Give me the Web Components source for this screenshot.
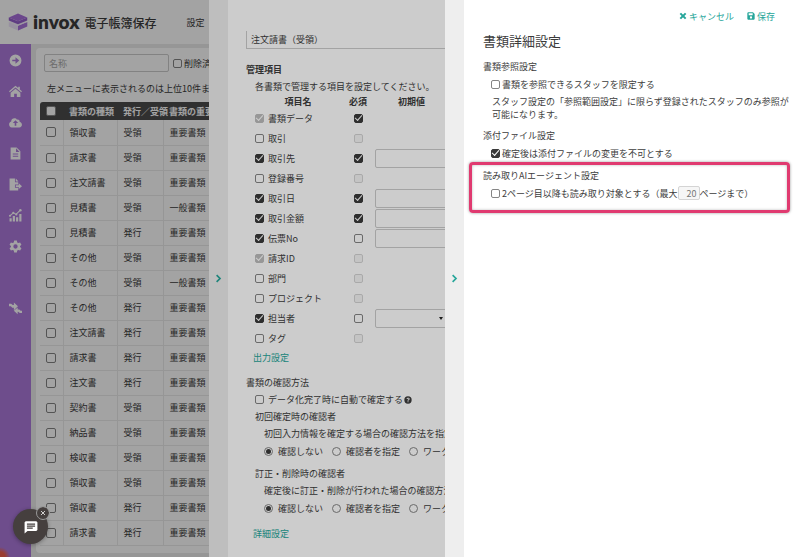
<!DOCTYPE html>
<html lang="ja">
<head>
<meta charset="utf-8">
<title>invox 電子帳簿保存</title>
<style>
html, body {
    height: 100%;
    margin: 0;
}

body {
    --teal: #26a69a;
    --text: #3c3c3c;
    overflow: hidden;
    font: 9px/17px "Noto Sans CJK JP", sans-serif;
    color: var(--text);
}
</style>
</head>
<body>
<invox-app></invox-app>
<script>
// shared by every element that holds a form control
const controls = `
* { box-sizing: border-box; }

input, select, button {
    font: inherit;
    color: inherit;
    margin: 0;
}

input[type=checkbox], input[type=radio] {
    appearance: none;
    flex: none;
    width: 9px;
    height: 9px;
    border: 1px solid #858585;
    border-radius: 2px;
    background: #fff;
    display: grid;
    place-content: center;
}

input[type=radio] { border-radius: 50%; }

input[type=checkbox]:checked {
    background: #3a3a3a;
    border-color: #3a3a3a;
}

input[type=checkbox]:checked::before {
    content: "";
    width: 6px;
    height: 3px;
    border: solid #fff;
    border-width: 0 0 1px 1px;
    transform: translateY(-1px) rotate(-48deg);
}

input[type=radio]:checked::before {
    content: "";
    width: 5px;
    height: 5px;
    border-radius: 50%;
    background: #3a3a3a;
}

input:disabled {
    border-color: #d4d4d4;
    background: #f6f6f6;
}

input[type=checkbox]:checked:disabled {
    border-color: #bdbdbd;
    background: #bdbdbd;
}

a {
    color: var(--teal);
    text-decoration: none;
}
`;

const icons = {
    next: `<path fill-rule="evenodd" d="M12 1a11 11 0 1 0 0 22 11 11 0 0 0 0-22zm-6 9.500h6V6l7 6-7 6v-4.500H6z"/>`,
    home: `<path d="M12 7 3 14.500V22h6.500v-6h5v6H21v-7.500z"/><path d="M12 1.500 0 11.500l1.500 1.800L12 4.600l10.500 8.700 1.500-1.800-4-3.400V3h-3v2.600z"/>`,
    upload: `<path fill-rule="evenodd" d="M19.500 10.500c.8-3-2.700-5-4.800-3.600C12.500 2.500 4 3.500 4 10.300-2 12.500-.5 21 5 21h14c6 0 6.800-8.500.5-10.500zM13.500 13v5h-3v-5H7l5-5 5 5z"/>`,
    file: `<path fill-rule="evenodd" d="M3 1h11l7 7v15H3zm10 1.500V9h6.500zM7 12v2h10v-2zm0 4v2h10v-2z"/>`,
    exporting: `<path d="M1 1h10v7h6v4h-6v6h6v5H1z"/><path d="m12.500 1 5 5.500h-5zM18 9.500l6 5.500-6 5.500v-4h-5.500v-3H18z"/>`,
    chart: `<path d="M1 17h4v6H1zm6-4h4v10H7zm6 2h4v8h-4zm6-6h4v14h-4z"/><path d="m1 13 7-6 5 3 7-7" fill="none" stroke="currentColor" stroke-width="2"/><circle cx="2" cy="12.500" r="2"/><circle cx="8" cy="7" r="2"/><circle cx="13.500" cy="10" r="2"/><circle cx="21" cy="2.500" r="2.300"/>`,
    gear: `<path fill-rule="evenodd" d="M9.500 1h5l.7 3.500 2 1.100 3.300-1.200 2.500 4.300L20.400 11v2l2.600 2.300-2.500 4.300-3.300-1.200-2 1.100-.7 3.500h-5l-.7-3.500-2-1.100-3.300 1.200L1 15.300 3.600 13v-2L1 8.700l2.500-4.300 3.300 1.200 2-1.100zM12 8a4 4 0 1 0 0 8 4 4 0 0 0 0-8z"/>`,
    swap: `<path d="M0 3h4l3 2.500h2V1l7.500 7L9 15v-4.500H6L3.500 8H0z"/><path d="M24 20.500h-4L17 18h-1v4.500L9 16l7-6v4h3l2.500 2H24z"/>`,
    chevron: `<path d="m7 3 9 9-9 9" fill="none" stroke="currentColor" stroke-width="4.500"/>`,
    cross: `<path d="m4 4 16 16M20 4 4 20" fill="none" stroke="currentColor" stroke-width="6"/>`,
    thinCross: `<path d="m4 4 16 16M20 4 4 20" fill="none" stroke="currentColor" stroke-width="3"/>`,
    save: `<path fill-rule="evenodd" d="M3 1h15l5 5v15l-2 2H3l-2-2V3zm2 3v6h12V4zm7 9a3.500 3.500 0 1 0 0 7 3.500 3.500 0 0 0 0-7z"/>`,
    help: `<path fill-rule="evenodd" d="M12 1a11 11 0 1 0 0 22 11 11 0 0 0 0-22zM7.500 9C8 3.500 17 4 17 9c0 3-3.500 3-3.500 5h-3c0-4 3.500-3.500 3.500-5.200 0-1.900-3.300-1.900-3.500.2zm3 7h3v3h-3z"/>`,
    chat: `<path fill-rule="evenodd" d="M3 2h18l2 2v13l-2 2H6l-5 4V4zm2 4v2h14V6zm0 3.500v2h14v-2zM5 13v2h10v-2z"/>`,
    logo: `<path fill="#efe4fa" d="M1 12v6l12 5 12-5v-6l-12 5z"/><path fill="#a873dc" d="m13 17 12-5v6l-12 5z"/><path fill="#f3ecfb" d="m1 12 5-2 7 3 7-3 5 2-12 5z"/><path fill="#9560cc" d="M1 6v4l12 5 12-5V6l-12 5z"/><path fill="#a86fdc" d="M1 6 13 1l12 5-12 5z"/>`,
};

class AppIcon extends HTMLElement {
    constructor() {
        super();
        this.attachShadow({ mode: "open" });
    }
    connectedCallback() {
        const size = this.getAttribute("size") || 14;
        this.shadowRoot.innerHTML = `<style>
        :host { display: inline-flex; flex: none; }
        svg { display: block; fill: currentColor; }
        </style>
        <svg width="${size}" height="${size}" viewBox="0 0 ${this.getAttribute("name") === "logo" ? 26 : 24} 24" aria-hidden="true">${icons[this.getAttribute("name")]}</svg>`;
    }
}
customElements.define("app-icon", AppIcon);

class AppHeader extends HTMLElement {
    constructor() {
        super();
        this.attachShadow({ mode: "open" }).innerHTML = `<style>
        :host {
            display: flex;
            align-items: center;
            height: 44px;
            padding-left: 8px;
            background: #fff;
        }
        .brand {
            display: flex;
            align-items: center;
            gap: 5px;
            font-size: 12px;
            font-weight: 500;
        }
        b {
            font: 800 19px/24px Lato, sans-serif;
        }
        nav { margin-left: 30px; }
        a { color: inherit; text-decoration: none; }
        </style>
        <div class="brand"><app-icon name="logo" size="20"></app-icon><b>invox</b><span>電子帳簿保存</span></div>
        <nav><a href="#settings">設定</a></nav>`;
    }
}
customElements.define("app-header", AppHeader);

class SideMenu extends HTMLElement {
    constructor() {
        super();
        const items = [["next", "開く"], ["home", "ホーム"], ["upload", "アップロード"], ["file", "書類"],
            ["exporting", "出力"], ["chart", "集計"], ["gear", "設定"], ["swap", "切り替え"]];
        this.attachShadow({ mode: "open" }).innerHTML = `<style>
        :host {
            display: block;
            flex: none;
            width: 31px;
            background: radial-gradient(circle at 0 100%, #f0604c 5px, #ad7adc 10px);
        }
        nav { display: flex; flex-direction: column; padding-top: 1px; }
        a {
            display: flex;
            justify-content: center;
            align-items: center;
            height: 31px;
            color: #fff;
        }
        a:last-child { margin-top: 31px; }
        </style>
        <nav>${items.map(([icon, label]) => `<a href="#${icon}" aria-label="${label}"><app-icon name="${icon}" size="13"></app-icon></a>`).join("")}</nav>`;
    }
}
customElements.define("side-menu", SideMenu);

class DocumentList extends HTMLElement {
    constructor() {
        super();
        const rows = [
            ["領収書", "受領", "重要書類"], ["請求書", "受領", "重要書類"], ["注文請書", "受領", "重要書類"],
            ["見積書", "受領", "一般書類"], ["見積書", "発行", "重要書類"], ["その他", "受領", "重要書類"],
            ["その他", "受領", "一般書類"], ["その他", "発行", "重要書類"], ["注文請書", "発行", "重要書類"],
            ["請求書", "発行", "重要書類"], ["注文書", "発行", "重要書類"], ["契約書", "受領", "重要書類"],
            ["納品書", "受領", "重要書類"], ["検収書", "受領", "重要書類"], ["領収書", "受領", "重要書類"],
            ["領収書", "発行", "重要書類"], ["請求書", "発行", "重要書類"],
        ];
        this.attachShadow({ mode: "open" }).innerHTML = `<style>${controls}
        :host {
            display: block;
            flex: 1;
            padding: 4px 5px;
            background: #ebebeb;
        }
        .card {
            height: 100%;
            padding: 6px 4px;
            border-radius: 4px;
            background: #fff;
        }
        form {
            display: flex;
            align-items: center;
            gap: 4px;
            padding-left: 4px;
        }
        .name {
            width: 125px;
            height: 18px;
            padding: 0 4px;
            border: 1px solid #ccc;
            border-radius: 2px;
            background: none;
        }
        .name::placeholder { color: #aaa; }
        label { display: flex; align-items: center; gap: 2px; }
        p { margin: 8px 0 5px 7px; }
        table {
            width: 100%;
            table-layout: fixed;
            border-collapse: collapse;
        }
        col.check { width: 23px; }
        col.type { width: 54px; }
        col.way { width: 46px; }
        td, th {
            height: 25px;
            padding: 0 6px;
            text-align: left;
            white-space: nowrap;
            border: solid #ececec;
            border-width: 0 1px 1px 0;
        }
        th {
            height: 18px;
            border: 0;
            background: #4b4b4b;
            color: #fff;
        }
        th:first-child { border-top-left-radius: 3px; }
        td input[type=checkbox], th input[type=checkbox] { width: 10px; height: 10px; }
        </style>
        <div class="card">
            <form>
                <input class="name" placeholder="名称" aria-label="名称">
                <label><input type="checkbox">削除済みを含む</label>
            </form>
            <p>左メニューに表示されるのは上位10件までです。</p>
            <table>
                <colgroup><col class="check"><col class="type"><col class="way"><col></colgroup>
                <thead><tr><th><input type="checkbox" aria-label="すべて選択"></th><th>書類の種類</th><th>発行／受領</th><th>書類の重要度</th></tr></thead>
                <tbody>${rows.map(row => `<tr><td><input type="checkbox" aria-label="${row[0]}"></td>${row.map(cell => `<td>${cell}</td>`).join("")}</tr>`).join("")}</tbody>
            </table>
        </div>`;
    }
}
customElements.define("document-list", DocumentList);

class SideDrawer extends HTMLElement {
    constructor() {
        super();
        this.attachShadow({ mode: "open" }).innerHTML = `<style>
        :host {
            position: absolute;
            inset: 0;
            display: flex;
            padding-left: var(--drawer-left);
            background: rgba(0, 0, 0, 0.2);
        }
        button {
            display: flex;
            justify-content: center;
            align-items: center;
            flex: none;
            width: 19px;
            padding: 0;
            border: 0;
            background: #eee;
            color: var(--teal);
        }
        .body {
            flex: 1;
            min-width: 0;
            overflow: hidden;
            background: #fff;
        }
        </style>
        <button aria-label="閉じる"><app-icon name="chevron" size="9"></app-icon></button>
        <div class="body"><slot></slot></div>`;
    }
}
customElements.define("side-drawer", SideDrawer);

class DocumentSettings extends HTMLElement {
    constructor() {
        super();
        // name, state of the two boxes, kind of default value field
        const items = [
            ["書類データ", "checked disabled", "checked", ""],
            ["取引", "", "disabled", ""],
            ["取引先", "checked", "checked", "text"],
            ["登録番号", "", "disabled", ""],
            ["取引日", "checked", "checked", "text"],
            ["取引金額", "checked", "checked", "text"],
            ["伝票No", "checked", "", "text"],
            ["請求ID", "checked disabled", "disabled", ""],
            ["部門", "", "disabled", ""],
            ["プロジェクト", "", "disabled", ""],
            ["担当者", "checked", "", "select"],
            ["タグ", "", "disabled", ""],
        ];
        const field = (kind, name) => {
            if (kind === "text")
                return `<input class="value" aria-label="${name}の初期値">`;
            if (kind === "select")
                return `<div class="pick"><select class="value" aria-label="${name}の初期値"><option></option></select></div>`;
            return "";
        };
        const radios = name => `<div class="radios">
            <label><input type="radio" name="${name}" checked>確認しない</label>
            <label><input type="radio" name="${name}">確認者を指定</label>
            <label><input type="radio" name="${name}">ワークフロー</label>
        </div>`;
        this.attachShadow({ mode: "open" }).innerHTML = `<style>${controls}
        :host {
            display: block;
            padding: 31px 19px 0 18px;
            white-space: nowrap;
        }
        h2, h3, p { margin: 0; font-size: inherit; font-weight: 400; }
        .title {
            display: block;
            width: 100%;
            height: 18px;
            padding: 0 4px;
            border: solid #ccc;
            border-width: 0 1px 1px;
            background: #fff;
        }
        h2 { margin-top: 8px; }
        h2.items { margin-top: 12px; font-weight: 700; }
        .indent { padding-left: 9px; }
        label { display: flex; align-items: center; gap: 4px; }
        label.auto { gap: 1px; }
        label.auto input { margin-right: 3px; }
        table {
            width: 193px;
            margin-bottom: 1px;
            border-collapse: collapse;
            table-layout: fixed;
        }
        col.use { width: 86px; }
        col.must { width: 34px; }
        th, td { padding: 0; height: 20px; }
        th { height: 13px; line-height: 13px; }
        td:nth-child(2) input { margin: auto; }
        .value {
            display: block;
            width: 100%;
            height: 19px;
            padding: 0 4px;
            border: 1px solid #ccc;
            border-radius: 2px;
            appearance: none;
            background: #fff;
        }
        .pick { display: grid; align-items: center; }
        .pick > * { grid-area: 1 / 1; }
        .pick::after {
            content: "";
            grid-area: 1 / 1;
            justify-self: end;
            margin-right: 5px;
            border: solid transparent;
            border-width: 3px 2px 0;
            border-top-color: #222;
            pointer-events: none;
        }
        .more { margin-left: 7px; }
        .radios { display: flex; gap: 9px; height: 18px; }
        .radios label { gap: 5px; }
        .next { margin-top: 5px; }
        .last { display: block; margin-top: 8px; }
        </style>
        <input class="title" value="注文請書（受領）" aria-label="書類の種類">
        <h2 class="items">管理項目</h2>
        <div class="indent">
            <p>各書類で管理する項目を設定してください。</p>
            <table>
                <colgroup><col class="use"><col class="must"><col></colgroup>
                <thead><tr><th>項目名</th><th>必須</th><th>初期値</th></tr></thead>
                <tbody>${items.map(([name, used, must, kind]) => `<tr>
                    <td><label><input type="checkbox" ${used}>${name}</label></td>
                    <td><input type="checkbox" aria-label="${name}を必須にする" ${must}></td>
                    <td>${field(kind, name)}</td>
                </tr>`).join("")}</tbody>
            </table>
        </div>
        <a class="more" href="#output">出力設定</a>
        <h2>書類の確認方法</h2>
        <div class="indent">
            <label class="auto"><input type="checkbox"><span>データ化完了時に自動で確定する</span><app-icon name="help" size="8"></app-icon></label>
            <h3>初回確定時の確認者</h3>
            <div class="indent">
                <p>初回入力情報を確定する場合の確認方法を指定してください。</p>
                ${radios("first")}
            </div>
            <h3 class="next">訂正・削除時の確認者</h3>
            <div class="indent">
                <p>確定後に訂正・削除が行われた場合の確認方法を指定してください。</p>
                ${radios("edit")}
            </div>
        </div>
        <a class="more last" href="#detail">詳細設定</a>`;
    }
}
customElements.define("document-settings", DocumentSettings);

class DetailSettings extends HTMLElement {
    constructor() {
        super();
        this.attachShadow({ mode: "open" }).innerHTML = `<style>${controls}
        :host {
            display: block;
            padding: 8px 10px 0 19px;
        }
        .actions {
            display: flex;
            justify-content: flex-end;
            gap: 13px;
            height: 16px;
            padding-right: 15px;
        }
        button {
            display: flex;
            align-items: center;
            gap: 2px;
            padding: 0;
            border: 0;
            background: none;
            color: var(--teal);
        }
        h1 {
            margin: 7px 0;
            font-size: 13px;
            line-height: 20px;
            font-weight: 400;
        }
        h2, p { margin: 0; font-size: inherit; font-weight: 400; }
        .check {
            display: flex;
            align-items: center;
            height: 18px;
            padding-left: 8px;
            white-space: nowrap;
        }
        label { display: flex; align-items: center; gap: 2px; }
        p {
            margin: 2px 0 6px;
            padding-left: 9px;
            line-height: 13px;
        }
        .agent {
            margin-left: -14px;
            padding: 2px 0 8px 11px;
            border: 3px solid #e03a70;
            border-radius: 4px;
            box-shadow: 0 0 3px #0006, inset 0 0 3px #0004;
        }
        .pages {
            width: 22px;
            height: 14px;
            padding: 0 2px;
            border: 1px solid #ddd;
            border-radius: 2px;
            text-align: right;
            color: #777;
        }
        </style>
        <div class="actions">
            <button><app-icon name="cross" size="8"></app-icon>キャンセル</button>
            <button><app-icon name="save" size="8"></app-icon>保存</button>
        </div>
        <h1>書類詳細設定</h1>
        <h2>書類参照設定</h2>
        <div class="check"><label><input type="checkbox">書類を参照できるスタッフを限定する</label></div>
        <p>スタッフ設定の「参照範囲設定」に限らず登録されたスタッフのみ参照が可能になります。</p>
        <h2>添付ファイル設定</h2>
        <div class="check"><label><input type="checkbox" checked>確定後は添付ファイルの変更を不可とする</label></div>
        <section class="agent">
            <h2>読み取りAIエージェント設定</h2>
            <div class="check">
                <label><input type="checkbox">2ページ目以降も読み取り対象とする（最大</label>
                <input class="pages" value="20" aria-label="最大ページ数" disabled>ページまで）
            </div>
        </section>`;
    }
}
customElements.define("detail-settings", DetailSettings);

class ChatLauncher extends HTMLElement {
    constructor() {
        super();
        this.attachShadow({ mode: "open" }).innerHTML = `<style>
        :host {
            position: absolute;
            left: 13px;
            bottom: 13px;
        }
        button {
            display: grid;
            place-content: center;
            padding: 0;
            border: 0;
            border-radius: 50%;
            background: #453f3e;
            color: #fff;
        }
        .open {
            width: 35px;
            height: 35px;
            box-shadow: 0 1px 4px #0005;
        }
        .close {
            position: absolute;
            top: -2px;
            right: -1px;
            width: 12px;
            height: 12px;
            outline: 1px solid #999;
        }
        </style>
        <button class="open" aria-label="チャット"><app-icon name="chat" size="14"></app-icon></button>
        <button class="close" aria-label="チャットを閉じる"><app-icon name="thinCross" size="6"></app-icon></button>`;
    }
}
customElements.define("chat-launcher", ChatLauncher);

class InvoxApp extends HTMLElement {
    constructor() {
        super();
        this.attachShadow({ mode: "open" }).innerHTML = `<style>
        :host {
            position: relative;
            display: flex;
            flex-direction: column;
            height: 100%;
            overflow: hidden;
        }
        main { display: flex; flex: 1; min-height: 0; }
        .settings { --drawer-left: 209px; }
        .detail { --drawer-left: 445px; }
        </style>
        <app-header></app-header>
        <main><side-menu></side-menu><document-list></document-list></main>
        <side-drawer class="settings"><document-settings></document-settings></side-drawer>
        <side-drawer class="detail"><detail-settings></detail-settings></side-drawer>
        <chat-launcher></chat-launcher>`;
    }
}
customElements.define("invox-app", InvoxApp);
</script>
</body>
</html>
